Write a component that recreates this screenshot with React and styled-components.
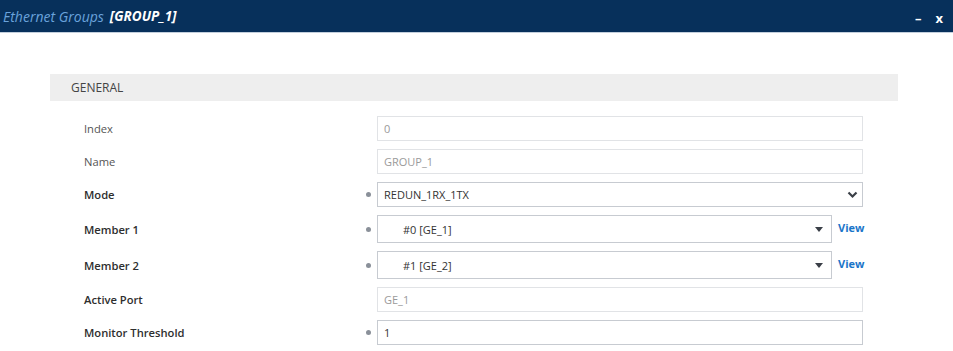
import React from 'react';
import styled, { createGlobalStyle } from 'styled-components';

const Global = createGlobalStyle`
	body {
		margin: 0;
		background: #fff;
		font-family: 'Open Sans', 'Noto Sans', sans-serif;
	}
`;

const Header = styled.div`
	display: flex;
	align-items: center;
	height: 32px;
	background: #07305b;
	border-bottom: 1px solid #c3cfdc;
	padding: 0 10px 0 3px;
	font-size: 14px;
	font-style: italic;
`;

const Crumb = styled.span`
	color: #6aa3dc;
`;

const Current = styled.span`
	color: #fff;
	font-weight: 700;
	font-size: 13.5px;
	margin-left: 6px;
`;

const WinButtons = styled.div`
	margin-left: auto;
	display: flex;
	align-items: center;
	gap: 14px;
	color: #fff;
	font-style: normal;
	font-weight: 700;
	font-size: 13px;
	padding-top: 4px;
`;

const Content = styled.div`
	padding: 41px 55px 0 50px;
`;

const SectionBar = styled.div`
	height: 27px;
	background: #eeeeee;
	display: flex;
	align-items: center;
	padding-left: 21px;
	font-size: 12px;
	color: #444;
`;

const Form = styled.div`
	display: grid;
	grid-template-columns: 281px 12px 486px;
	row-gap: 8px;
	padding: 15px 0 0 34px;
	align-items: center;
`;

const Label = styled.div`
	font-size: 11.2px;
	color: ${(p) => (p.$light ? '#555' : '#2e2e2e')};
	font-weight: ${(p) => (p.$light ? 400 : 600)};
`;

const Dot = styled.span`
	width: 5px;
	height: 5px;
	border-radius: 50%;
	background: ${(p) => (p.$show ? '#8a9099' : 'transparent')};
	margin-left: 1px;
`;

const Field = styled.div`
	display: flex;
	align-items: center;
	gap: 6px;
`;

const Box = styled.div`
	flex: 1;
	box-sizing: border-box;
	height: ${(p) => (p.$tall ? 28 : 25)}px;
	border: 1px solid ${(p) => (p.$readonly ? '#e1e3e6' : '#c7cbd1')};
	display: flex;
	align-items: center;
	padding-left: ${(p) => (p.$indent ? 25 : 6)}px;
	padding-right: ${(p) => (p.$indent ? 8 : 4)}px;
	font-size: 11px;
	color: ${(p) => (p.$readonly ? '#9a9a9a' : '#333')};
	background: #fff;
`;

const Value = styled.span`
	flex: 1;
`;

const ViewLink = styled.a`
	color: #1b75c9;
	font-weight: 700;
	font-size: 11px;
	width: 25px;
	margin-top: -3px;
	cursor: pointer;
`;

const Chevron = () => (
	<svg width="11" height="8" viewBox="0 0 11 8">
		<path d="M1.5 1.5 L5.5 5.5 L9.5 1.5" stroke="#3a3f47" strokeWidth="2.2" fill="none" />
	</svg>
);

const Caret = () => (
	<svg width="8" height="5" viewBox="0 0 8 5">
		<path d="M0 0 H8 L4 5 Z" fill="#3a3f47" />
	</svg>
);

const rows = [
	{ label: 'Index', value: '0', readonly: true, light: true },
	{ label: 'Name', value: 'GROUP_1', readonly: true, light: true },
	{ label: 'Mode', value: 'REDUN_1RX_1TX', kind: 'select' },
	{ label: 'Member 1', value: '#0 [GE_1]', kind: 'combo' },
	{ label: 'Member 2', value: '#1 [GE_2]', kind: 'combo' },
	{ label: 'Active Port', value: 'GE_1', readonly: true },
	{ label: 'Monitor Threshold', value: '1' },
];

export default function App() {
	return (
		<>
			<Global />
			<Header>
				<Crumb>Ethernet Groups</Crumb>
				<Current>[GROUP_1]</Current>
				<WinButtons>
					<span>–</span>
					<span>x</span>
				</WinButtons>
			</Header>
			<Content>
				<SectionBar>GENERAL</SectionBar>
				<Form>
					{rows.map((r) => (
						<React.Fragment key={r.label}>
							<Label $light={r.light}>{r.label}</Label>
							<Dot $show={!r.readonly} />
							<Field>
								<Box $readonly={r.readonly} $tall={r.kind === 'combo'} $indent={r.kind === 'combo'}>
									<Value>{r.value}</Value>
									{r.kind === 'select' && <Chevron />}
									{r.kind === 'combo' && <Caret />}
								</Box>
								{r.kind === 'combo' && <ViewLink>View</ViewLink>}
							</Field>
						</React.Fragment>
					))}
				</Form>
			</Content>
		</>
	);
}
